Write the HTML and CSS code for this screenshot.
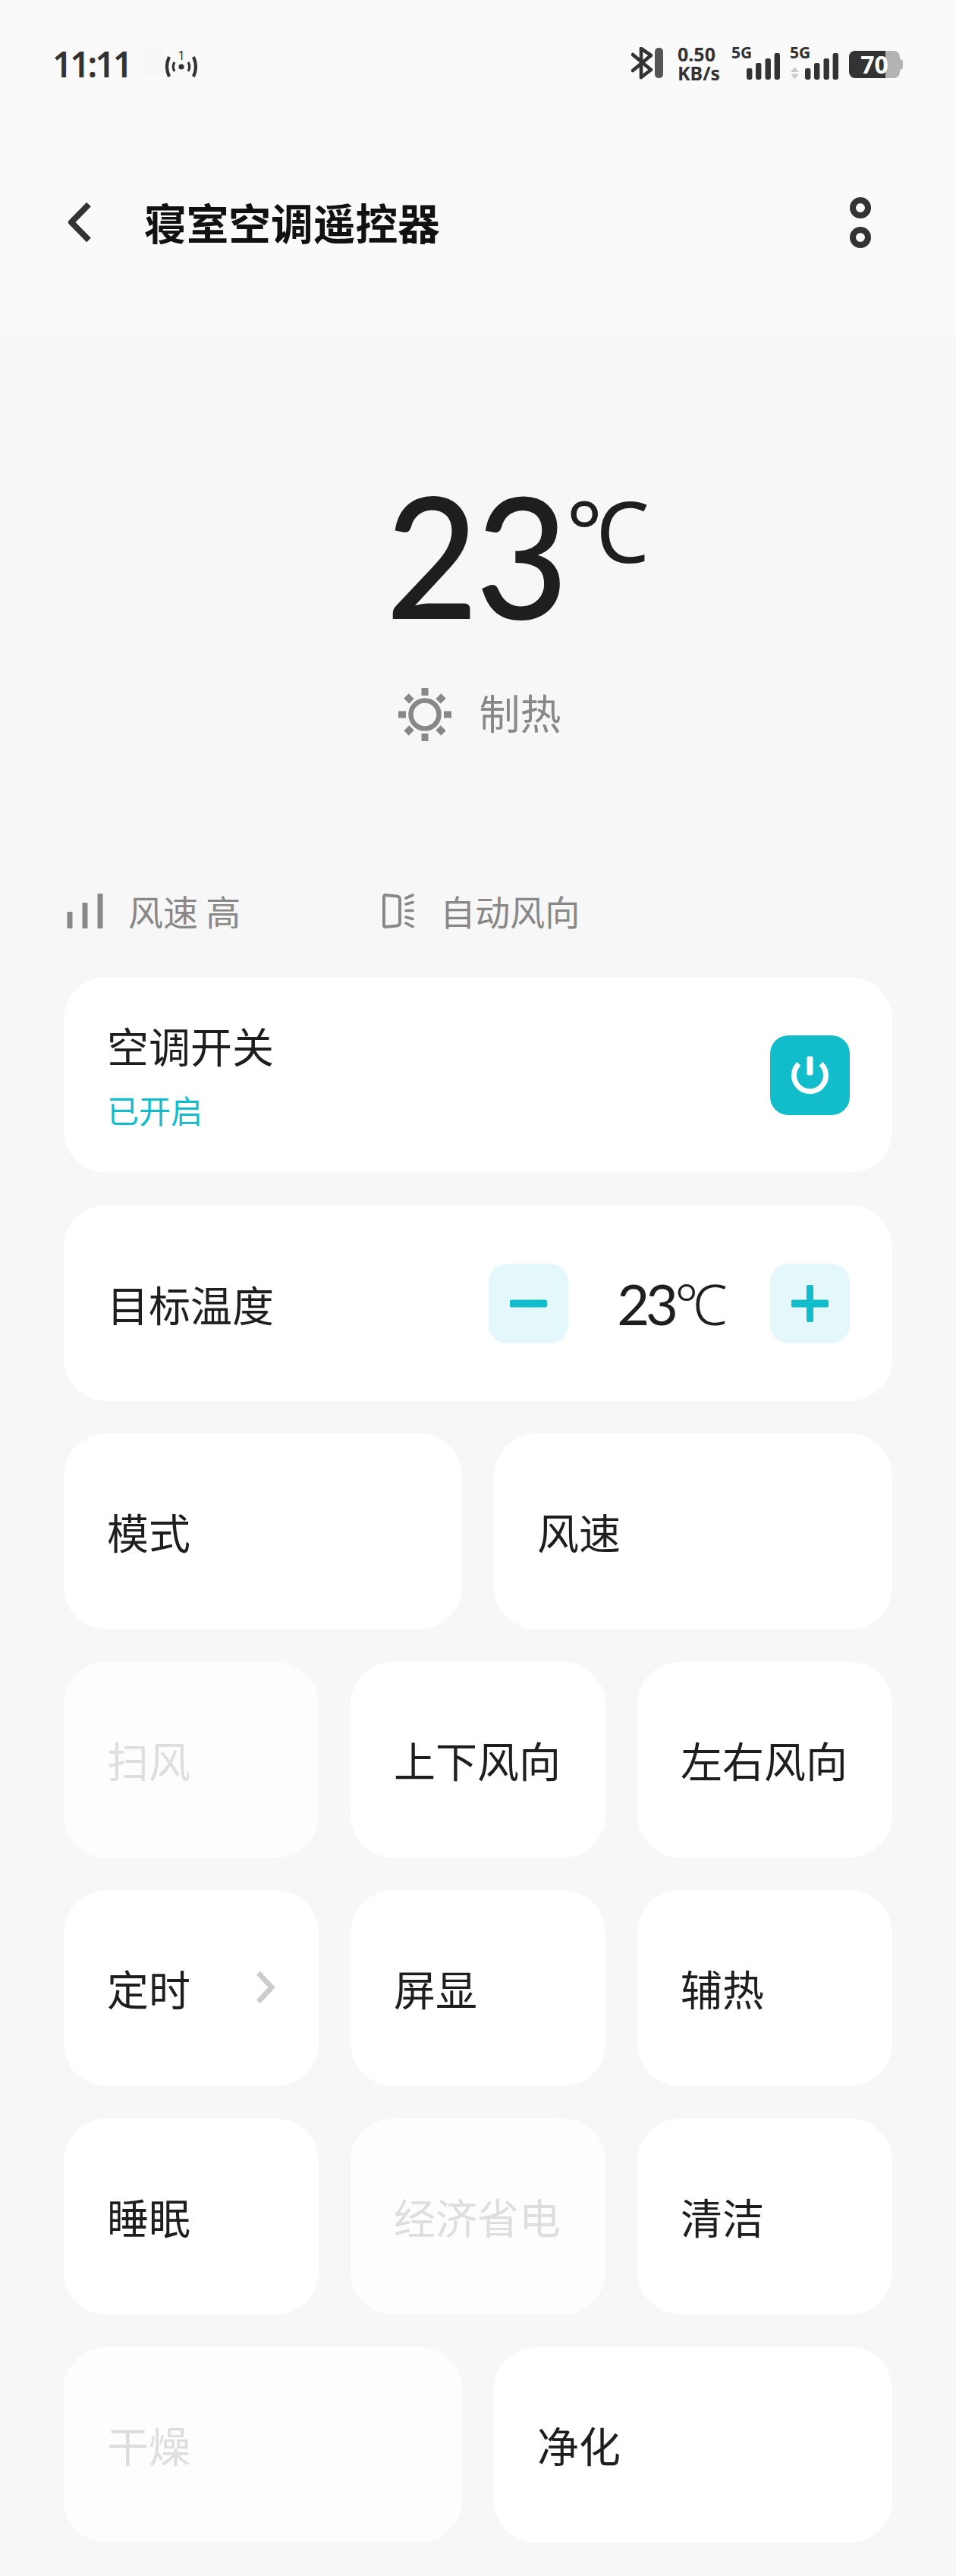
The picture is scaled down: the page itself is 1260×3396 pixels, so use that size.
FILE: index.html
```html
<!DOCTYPE html>
<html lang="zh-CN">

<head>
  <meta charset="UTF-8">
  <meta name="viewport" content="width=device-width, initial-scale=1.0">
  <title>寝室空调遥控器</title>

  <link rel="stylesheet" href="styles.css">
</head>

<body>

  <div class="header">
    <div class="statusbar">
      <div class="time">11:11</div>
      <div class="notice"></div>
      <svg class="hotspot" width="44" height="46" viewBox="0 -6 44 46">
        <text x="21" y="14" class="hotspot-num">1</text>
        <circle cx="21" cy="23" r="3.6" fill="#333"/>
        <path d="M12 17 Q8.5 23 12 29 M30 17 Q33.5 23 30 29" fill="none" stroke="#333" stroke-width="3.2"/>
        <path d="M5 10 Q-1 23 5 36 M37 10 Q43 23 37 36" fill="none" stroke="#333" stroke-width="4.2"/>
      </svg>

      <div class="status-right">
        <svg class="icon-bt" width="42" height="43" viewBox="0 0 42 43">
          <path d="M2 10 L26 30 L13 40 V2 L26 11 L2 31" fill="none" stroke="#333" stroke-width="4.6" stroke-linejoin="round" stroke-linecap="round"/>
          <rect x="31" y="1" width="11" height="40" rx="5" fill="#555"/>
        </svg>
        <div class="speed">0.50<br>KB/s</div>
        <svg class="signal" width="64" height="53" viewBox="0 -10 64 53">
          <text x="0" y="15" class="signal-text">5G</text>
          <rect x="20" y="28" width="7.4" height="15" rx="2.4" fill="#333"/>
          <rect x="32" y="21" width="7.4" height="22" rx="2.4" fill="#333"/>
          <rect x="44.5" y="15" width="7.4" height="28" rx="2.4" fill="#333"/>
          <rect x="56.6" y="8" width="7.4" height="35" rx="2.4" fill="#333"/>
        </svg>
        <svg class="signal signal-2" width="64" height="53" viewBox="0 -10 64 53">
          <text x="0" y="15" class="signal-text">5G</text>
          <path d="M6.5 26 L12 33 H1 Z M1 35.5 H12 L6.5 42.5 Z" fill="#ccc"/>
          <rect x="20" y="28" width="7.4" height="15" rx="2.4" fill="#333"/>
          <rect x="32" y="21" width="7.4" height="22" rx="2.4" fill="#333"/>
          <rect x="44.5" y="15" width="7.4" height="28" rx="2.4" fill="#333"/>
          <rect x="56.6" y="8" width="7.4" height="35" rx="2.4" fill="#333"/>
        </svg>
        <div class="battery-wrap">
          <div class="battery">70</div>
          <div class="battery-nub"></div>
        </div>
      </div>
    </div>

    <div class="titlebar">
      <svg class="back" width="32" height="54" viewBox="0 0 32 54">
        <path d="M28 3.5 L5 27 L28 50.5" fill="none" stroke="#333" stroke-width="8" stroke-linejoin="round"/>
      </svg>
      <h1 class="title">寝室空调遥控器</h1>
      <svg class="more" width="28" height="67" viewBox="0 0 28 67">
        <circle cx="14" cy="14" r="10" fill="none" stroke="#333" stroke-width="8"/>
        <circle cx="14" cy="53" r="10" fill="none" stroke="#333" stroke-width="8"/>
      </svg>
    </div>
  </div>

  <div class="hero">
    <div class="temp">
      <span class="temp-num">23</span>
      <span class="temp-unit">°C</span>
    </div>
    <div class="mode">
      <svg width="70" height="70" viewBox="0 0 70 70">
        <circle cx="35" cy="35" r="18.5" fill="none" stroke="#888" stroke-width="6.5"/>
        <g stroke="#888" stroke-width="9" stroke-linecap="butt">
          <path d="M35 0 V10 M35 60 V70 M0 35 H10 M60 35 H70"/>
          <path d="M10.5 10.5 L17.5 17.5 M52.5 52.5 L59.5 59.5 M59.5 10.5 L52.5 17.5 M17.5 52.5 L10.5 59.5"/>
        </g>
      </svg>
      <span class="mode-text">制热</span>
    </div>
    <div class="info">
      <div class="info-item">
        <svg width="48" height="46" viewBox="0 0 48 46">
          <rect x="0.5" y="24" width="7" height="22" rx="1" fill="#888"/>
          <rect x="20.5" y="12" width="7" height="34" rx="1" fill="#888"/>
          <rect x="40.5" y="0" width="7" height="46" rx="1" fill="#888"/>
        </svg>
        <span class="info-text">风速 高</span>
      </div>
      <div class="info-item">
        <svg width="44" height="46" viewBox="0 0 44 46">
          <path d="M5 2 L20 3.5 Q24 4 24 8 V38 Q24 42 20 42.5 L5 44 Q3 44 3 41 V5 Q3 2 5 2 Z" fill="none" stroke="#888" stroke-width="4"/>
          <path d="M32 6 L41 2 M32 14 L41 11.5 M32 22.5 H41 M32 31 L41 33.5 M32 39 L41 43.7" fill="none" stroke="#888" stroke-width="3.6" stroke-linecap="round"/>
        </svg>
        <span class="info-text">自动风向</span>
      </div>
    </div>
  </div>

  <div class="cards">
    <div class="card wide">
      <div class="card-text">
        <div class="card-name">空调开关</div>
        <div class="card-state">已开启</div>
      </div>
      <div class="btn btn-on">
        <svg width="105" height="105" viewBox="0 0 105 105">
          <path d="M38 37.5 A21 21 0 1 0 67 37.5" fill="none" stroke="#fff" stroke-width="7"/>
          <rect x="48.5" y="27.5" width="8" height="25" rx="2" fill="#fff"/>
        </svg>
      </div>
    </div>

    <div class="card wide">
      <div class="card-name">目标温度</div>
      <div class="stepper">
        <div class="btn btn-light">
          <svg width="105" height="105" viewBox="0 0 105 105">
            <rect x="28" y="47.5" width="49" height="10" rx="2" fill="#11bccb"/>
          </svg>
        </div>
        <div class="stepper-value">23<span class="stepper-unit">°C</span></div>
        <div class="btn btn-light">
          <svg width="105" height="105" viewBox="0 0 105 105">
            <rect x="28" y="47.5" width="49" height="10" rx="2" fill="#11bccb"/>
            <rect x="48" y="28" width="9" height="49" rx="2" fill="#11bccb"/>
          </svg>
        </div>
      </div>
    </div>

    <div class="card half"><div class="card-name">模式</div></div>
    <div class="card half"><div class="card-name">风速</div></div>

    <div class="card third off"><div class="card-name">扫风</div></div>
    <div class="card third"><div class="card-name">上下风向</div></div>
    <div class="card third"><div class="card-name">左右风向</div></div>

    <div class="card third">
      <div class="card-name">定时</div>
      <svg class="arrow" width="26" height="44" viewBox="0 0 26 44">
        <path d="M2.5 3 L20 22 L2.5 41" fill="none" stroke="#ccc" stroke-width="7"/>
      </svg>
    </div>
    <div class="card third"><div class="card-name">屏显</div></div>
    <div class="card third"><div class="card-name">辅热</div></div>

    <div class="card third"><div class="card-name">睡眠</div></div>
    <div class="card third off"><div class="card-name">经济省电</div></div>
    <div class="card third"><div class="card-name">清洁</div></div>

    <div class="card half off"><div class="card-name">干燥</div></div>
    <div class="card half"><div class="card-name">净化</div></div>
  </div>

</body>

</html>
```

FILE: styles.css
```css
* {
  box-sizing: border-box;
}

body {
  margin: 0;
  height: 3396px;
  overflow: hidden;
  background-color: #f7f7f7;
  color: #1e1e1e;
  font-family: "Noto Sans CJK SC", "Noto Sans", sans-serif;
}

.header {
  height: 444px;
  background-color: #fafafa;
}

.statusbar {
  display: flex;
  align-items: flex-start;
  padding: 62px 70px 0 71px;
  height: 105px;
}

.time {
  font-family: "Noto Sans", sans-serif;
  font-size: 46px;
  font-weight: 600;
  line-height: 46px;
  color: #333;
  width: 97px;
  margin-top: -1px;
  margin-left: -2px;
  letter-spacing: -3px;
  white-space: nowrap;
}

.notice {
  width: 27px;
  height: 38px;
  margin: 2px 0 0 25px;
  border-radius: 6px;
  background-color: #f7f7f7;
}

.hotspot {
  margin: -3px 0 0 0;
}

.hotspot-num {
  font-family: "Noto Sans", sans-serif;
  font-size: 17px;
  fill: #333;
  text-anchor: middle;
}

.status-right {
  display: flex;
  align-items: flex-start;
  margin-left: auto;
}

.speed {
  font-family: "Noto Sans", sans-serif;
  font-size: 25px;
  font-weight: 700;
  line-height: 25px;
  color: #333;
  width: 53px;
  margin: -3px 18px 0 19px;
  white-space: nowrap;
}

.signal {
  margin-top: -10px;
}

.signal-text {
  font-family: "Noto Sans", sans-serif;
  font-size: 21px;
  font-weight: 700;
  fill: #333;
}

.signal-2 {
  margin: -10px 14px 0 13px;
}

.battery-wrap {
  display: flex;
  align-items: center;
  margin-top: 5px;
}

.battery {
  width: 67px;
  height: 36px;
  border-radius: 8px;
  background: linear-gradient(90deg, #333 48px, #b3b3b3 48px);
  color: #fff;
  font-family: "Noto Sans", sans-serif;
  font-size: 32px;
  font-weight: 700;
  line-height: 36px;
  text-align: center;
}

.battery-nub {
  width: 4px;
  height: 14px;
  border-radius: 0 4px 4px 0;
  background-color: #b3b3b3;
}

.titlebar {
  display: flex;
  align-items: center;
  height: 70px;
  margin-top: 153px;
  padding: 0 112px 0 89px;
}

.title {
  flex: 1;
  margin: -3px 0 0 69px;
  font-size: 55.7px;
  font-weight: 700;
  color: #111;
}

.hero {
  padding-top: 166px;
}

.temp {
  display: flex;
  justify-content: center;
  height: 240px;
  padding-right: 12px;
  font-family: Lato, sans-serif;
}

/* Lato's digits are wider than the reference */
.temp-num {
  font-size: 222px;
  font-weight: 500;
  line-height: 240px;
  letter-spacing: -4px;
  transform: scaleX(0.95);
}

.temp-unit {
  width: 0;
  margin: 33px 0 0 -5px;
  font-family: "Noto Sans", sans-serif;
  font-size: 112px;
  line-height: 112px;
  letter-spacing: -9px;
  white-space: nowrap;
}

.mode {
  display: flex;
  justify-content: center;
  align-items: center;
  gap: 37px;
  height: 70px;
  margin-top: 57px;
  padding-left: 4px;
}

.mode-text {
  margin-top: -7px;
  font-size: 54px;
  color: #888;
}

.info {
  display: flex;
  align-items: center;
  height: 46px;
  margin-top: 201px;
  padding-left: 88px;
}

.info-item {
  display: flex;
  align-items: center;
  gap: 33px;
  margin-right: 186px;
  font-size: 46px;
  line-height: 46px;
  color: #888;
  white-space: nowrap;
}

.info-text {
  margin-top: -3px;
}

.cards {
  display: grid;
  grid-template-columns: repeat(6, 1fr);
  grid-auto-rows: 258px;
  gap: 43px 42px;
  margin: 64px 84px 0 84px;
}

.card {
  display: flex;
  justify-content: space-between;
  align-items: center;
  padding: 0 56px 2px 57px;
  border-radius: 56px;
  background-color: #fff;
}

.wide {
  grid-column: span 6;
  padding-bottom: 0;
}

.half {
  grid-column: span 3;
}

.third {
  grid-column: span 2;
}

.card-text {
  margin-top: -6px;
}

.card-name {
  font-size: 55px;
  line-height: 72px;
  white-space: nowrap;
}

.card-state {
  margin-top: 25px;
  font-size: 42px;
  line-height: 50px;
  color: #11bccb;
}

.off {
  background-color: #fdfdfd;
}

.off .card-name {
  color: #dedede;
}

.btn {
  width: 105px;
  height: 105px;
  border-radius: 24px;
}

.btn svg {
  display: block;
}

.btn-on {
  background-color: #11bccb;
}

.btn-light {
  background-color: #e4f8fb;
}

.stepper {
  display: flex;
  align-items: center;
}

.stepper-value {
  width: 266px;
  font-family: Lato, sans-serif;
  font-size: 74px;
  letter-spacing: -5px;
  text-align: center;
  white-space: nowrap;
}

.stepper-unit {
  font-family: "Noto Sans", sans-serif;
  font-weight: 300;
  letter-spacing: -8px;
}
```
